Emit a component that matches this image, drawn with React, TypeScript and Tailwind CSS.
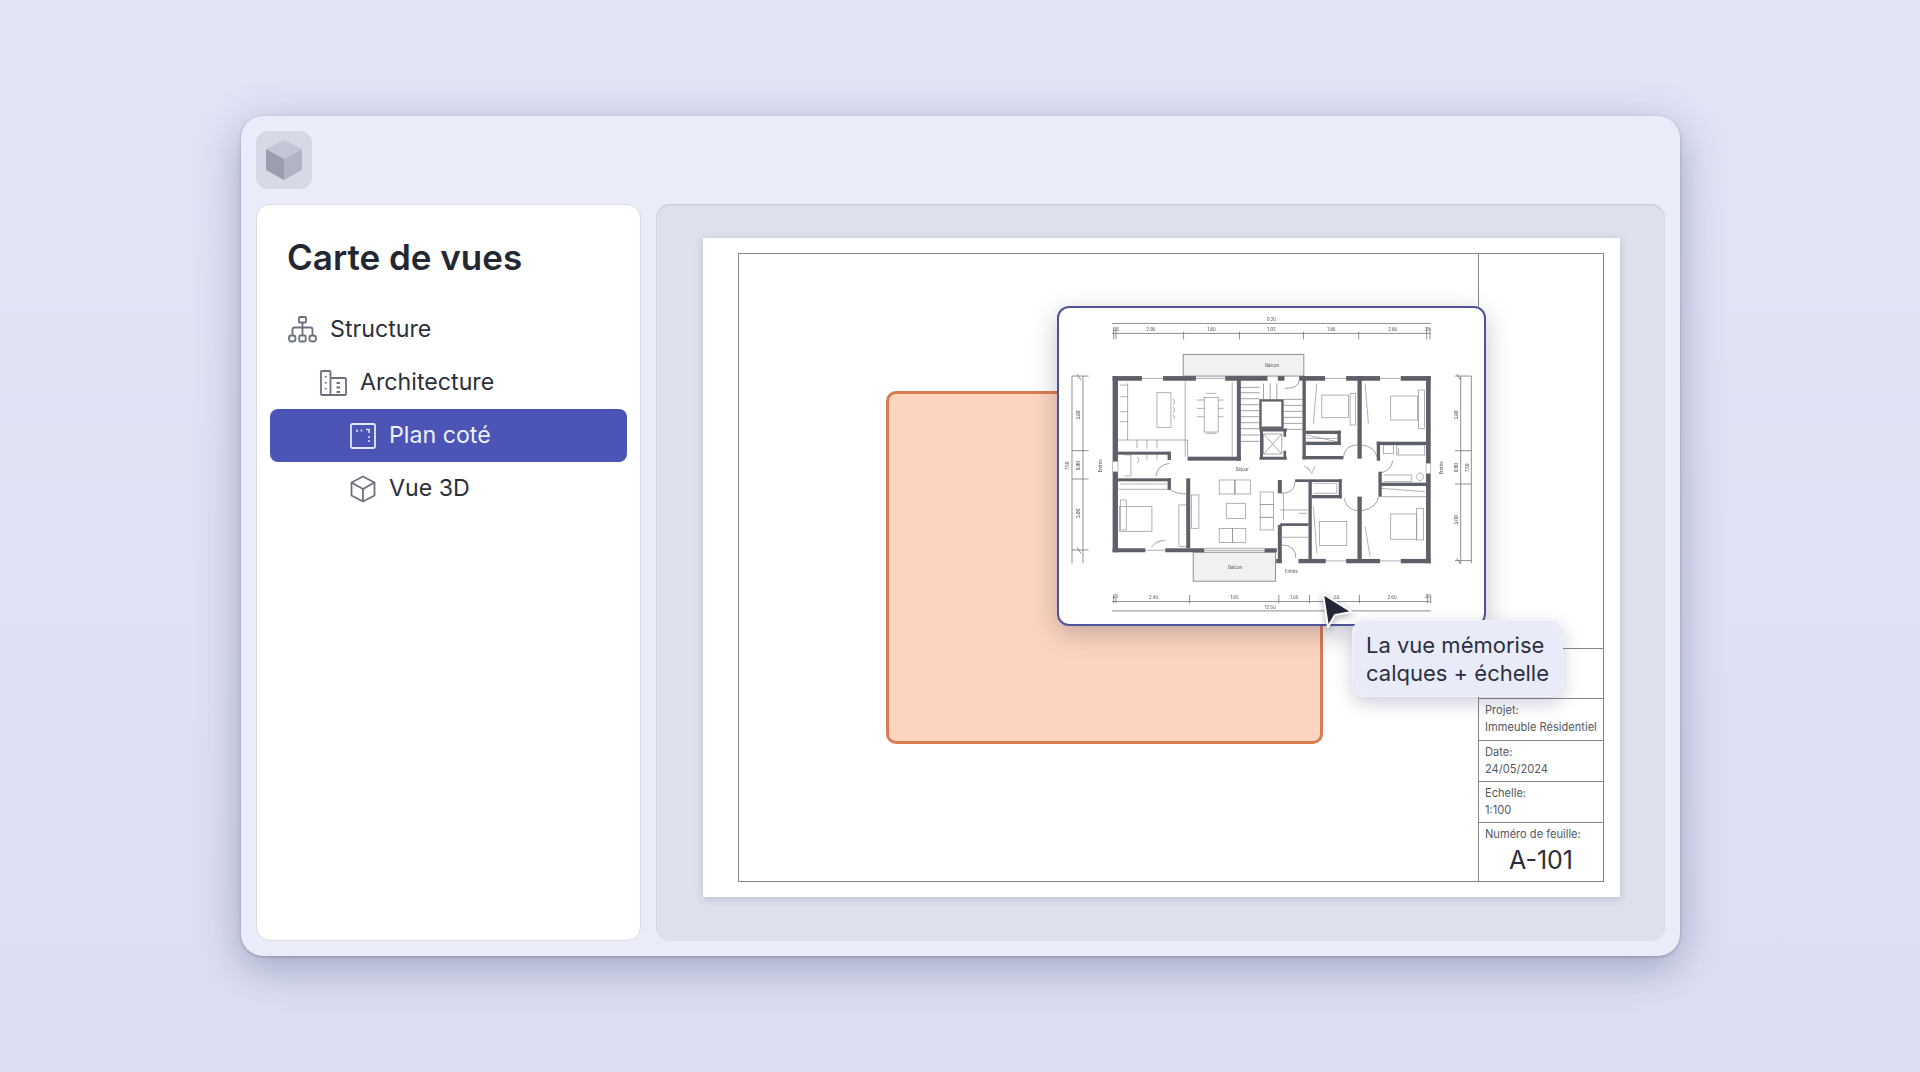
import React from "react";

const walls: number[][] = [
  [187,228,88,14],[338,228,99,14],[525,228,127,14],[683,228,20,14],[747,228,78,14],[888,228,102,14],[1052,228,90,14],
  [187,228,16,257],[187,515,16,242],[187,745,98,12],[345,745,117,12],[643,745,37,12],
  [1128,228,14,262],[1128,520,14,270],[745,777,82,13],[888,777,102,13],[1052,777,90,13],[678,777,17,13],
  [560,228,12,254],[412,470,160,12],[408,535,12,210],
  [203,455,157,9],[203,535,159,9],[352,455,10,25],[352,535,10,35],
  [757,228,10,250],[757,468,123,10],[767,392,105,10],[767,425,105,10],[862,392,10,43],
  [922,228,13,248],[980,425,10,57],[980,425,148,10],[985,515,10,75],[990,548,138,10],
  [683,540,12,40],[683,675,12,110],[735,538,140,8],[775,545,10,232],[785,585,90,10],[866,538,9,57],
  [922,590,13,187],[690,670,85,8]
];

const thin: number[][] = [
  [275,235,338,235],[437,235,525,235],[825,235,888,235],[990,235,1052,235],[285,751,345,751],[827,783,888,783],[990,783,1052,783],
  [462,751,643,751],[462,745,643,745],[690,712,775,712],
  [405,242,405,470],[546,245,546,470],[232,250,232,420],[232,420,412,420],[412,470,412,420],
  [203,420,232,420],[205,568,358,568],[770,415,862,415],[990,590,1128,590],[690,630,775,630]
];

const furniture: number[][] = [
  [320,278,42,104],[462,292,42,104],[815,285,80,68],[1022,288,80,72],[207,620,98,74],[808,665,82,72],[1022,642,78,76],
  [507,540,47,42],[554,540,47,42],[528,610,58,46],[507,686,40,42],[547,686,40,42],[630,576,40,38],[630,614,40,38],[630,652,40,38],
  [424,585,22,100],[386,615,26,125],[1040,435,84,30],[1000,435,30,26],[900,280,16,95],[1105,270,18,115],[1100,625,20,95],[210,600,18,90]
];

const dims: [number, number, string][] = [
  [664,60,"9.20"],[302,90,"2.90"],[484,90,"1.80"],[664,90,"1.92"],[844,90,"1.80"],[1028,90,"2.80"],[197,90,".25"],[1132,90,".25"],
  [310,894,"2.40"],[553,894,"1.65"],[732,894,"1.05"],[858,894,".50"],[1026,894,"2.60"],[195,890,".25"],[1132,890,".25"],[660,922,"12.50"],
  [576,508,"Séjour"],[724,816,"Entrée"]
];

const vdims: [number, number, string][] = [
  [90,345,"3.60"],[90,497,"0.90"],[90,640,"3.00"],[56,497,"7.50"],[155,497,"Entrée"],
  [1225,345,"3.60"],[1225,503,"0.90"],[1225,660,"3.00"],[1256,503,"7.50"],[1178,503,"Entrée"]
];

function FloorPlan() {
  const ink = "#777a82";
  return (
    <svg viewBox="26 24 1276 948" className="block h-full w-full blur-[0.6px]">
      <g stroke={ink} strokeWidth="2.5" fill="none">
        <path d="M185 70H1142M185 100H1142M185 905H1142M185 933H1142M65 228V790M98 228V790M1232 228V790M1264 228V790" />
        <path d="M190 82V118M197 84V118M400 95V118M568 95V118M760 95V118M926 95V118M1130 82V118M1140 84V118" />
        <path d="M190 885V910M197 890V910M418 885V910M686 885V910M778 885V910M820 885V910M928 885V910M1132 885V910M1142 885V910" />
        <path d="M65 228H115M65 452H115M65 537H115M65 750H115M1215 228H1264M1215 452H1264M1215 552H1264M1215 782H1264" />
        <path d="M80 222L92 240M80 742L92 760M1220 222L1232 240M1220 775L1232 793" />
      </g>
      {dims.map(([x, y, t]) => (
        <text key={t + x} x={x} y={y + 4} fontSize="13" textAnchor="middle" fill="#44464c" fontFamily="Inter, sans-serif">{t}</text>
      ))}
      {vdims.map(([x, y, t]) => (
        <text key={t + y + x} x={x} y={y} fontSize="13" textAnchor="middle" fill="#44464c" fontFamily="Inter, sans-serif" transform={"rotate(-90 " + x + " " + y + ")"}>{t}</text>
      ))}
      <rect x="399" y="163" width="362" height="65" fill="#f1f1f2" stroke="#8f9198" strokeWidth="3" />
      <rect x="429" y="757" width="247" height="87" fill="#f1f1f2" stroke="#8f9198" strokeWidth="3" />
      <text x="666" y="200" fontSize="13" textAnchor="middle" fill="#44464c" fontFamily="Inter, sans-serif">Balcon</text>
      <text x="555" y="806" fontSize="13" textAnchor="middle" fill="#44464c" fontFamily="Inter, sans-serif">Balcon</text>
      <g stroke="#94969d" strokeWidth="2.2" fill="none">
        {furniture.map((r, i) => <rect key={i} x={r[0]} y={r[1]} width={r[2]} height={r[3]} />)}
        <path d="M554 540V582M547 686V728M440 300H462M440 325H462M440 350H462M504 300H520M504 325H520M504 350H520M468 280H498M468 400H498" />
        <path d="M368 295Q378 305 368 315M368 320Q378 330 368 340M368 345Q378 350 368 358" />
        <path d="M208 255H232M208 290H232M208 335H232M208 365H232M260 420V445M290 420V445M320 420V445M222 465H242V528H222" />
        <path d="M262 470Q270 480 262 490M290 464V480M320 464V480M210 552H350M770 405L860 425M992 565L1125 575" />
        <path d="M800 250L790 370M945 250L955 370M945 680L960 770" />
        <path d="M1000 525H1085V545H1000M1100 530A10 12 0 1 1 1100 531M1045 445V465" />
        <path d="M790 550H860V580H790M700 580V660M745 640H770M790 620L800 760" />
        <path d="M770 500L785 520L795 498M762 498L778 510" />
      </g>
      <g stroke="#7f8189" strokeWidth="2.2" fill="none">
        <path d="M317 530Q320 495 358 490M362 570Q372 580 408 582M695 580Q735 580 735 542M703 265Q747 265 747 240M880 470Q885 435 922 435M935 435Q975 440 980 470M882 595Q890 630 922 632M935 632Q980 625 985 590M990 520Q1025 510 1028 482M695 735Q737 735 737 775M303 742Q320 720 345 722" />
      </g>
      <g stroke="#7f8189" strokeWidth="2.2" fill="none">
        <path d="M572 262H628M572 278H628M572 296H628M572 314H628M572 332H628M572 350H628M572 368H628M572 386H628M572 405H628M572 424H628M700 298H757M700 316H757M700 334H757M700 352H757M700 370H757M700 388H757M640 250V298M660 250V298M680 250V298" />
      </g>
      <g fill="#5d6068">
        {walls.map((r, i) => <rect key={i} x={r[0]} y={r[1]} width={r[2]} height={r[3]} />)}
      </g>
      <g stroke="#5d6068" fill="none">
        <rect x="631" y="301" width="66" height="82" strokeWidth="7" />
        <path d="M628 390H710M628 475H710M634 390V475" strokeWidth="9" />
        <path d="M704 390V410M704 452V475" strokeWidth="8" />
        <path d="M640 402L695 462M695 402L640 462M640 402H695V462H640Z" strokeWidth="2" stroke="#7f8189" />
      </g>
      <g stroke="#8f9198" strokeWidth="2.2" fill="none">
        {thin.map((l, i) => <line key={i} x1={l[0]} y1={l[1]} x2={l[2]} y2={l[3]} />)}
      </g>
      <rect x="187" y="485" width="16" height="30" fill="#fff" stroke="#a3a5ac" strokeWidth="2" />
      <rect x="1128" y="490" width="14" height="30" fill="#fff" stroke="#a3a5ac" strokeWidth="2" />
    </svg>
  );
}

function StructureIcon() {
  return (
    <svg viewBox="0 0 29 27" className="h-[27px] w-[29px]" fill="none" stroke="#6b7080" strokeWidth="1.8">
      <rect x="11" y="1" width="7" height="5.5" rx="0.8" />
      <path d="M14.5 6.5V15M4.5 19V13.5Q4.5 11.5 6.5 11.5H22.5Q24.5 11.5 24.5 13.5V19M14.5 15V19" />
      <rect x="1" y="19.5" width="6.5" height="6" rx="2.4" />
      <rect x="11.2" y="19.5" width="6.5" height="6" rx="1.4" />
      <rect x="21.4" y="19.5" width="6.5" height="6" rx="2.4" />
    </svg>
  );
}

function BuildingIcon() {
  return (
    <svg viewBox="0 0 27 26" className="h-[26px] w-[27px]" fill="none" stroke="#6b7080" strokeWidth="1.8">
      <path d="M2 1H9.5A1 1 0 0 1 10.5 2V25H2A1 1 0 0 1 1 24V2A1 1 0 0 1 2 1Z" />
      <path d="M10.5 8H25A1 1 0 0 1 26 9V24A1 1 0 0 1 25 25H10.5" />
      <path d="M5.7 6V7.5M5.7 12V13.5M5.7 18V19.5M16.5 13H20M16.5 17.5H20M16.5 22H20" />
    </svg>
  );
}

function PlanIcon() {
  return (
    <svg viewBox="0 0 26 26" className="h-[26px] w-[26px]" fill="none" stroke="#e4e7fa" strokeWidth="1.8">
      <rect x="1" y="1" width="24" height="24" rx="1.5" />
      <path d="M7 6.5V9M11.5 6.5V8.5M16 6.5H19V10M19 13V15M19 17V19" strokeWidth="1.5" />
    </svg>
  );
}

function BoxIcon() {
  return (
    <svg viewBox="0 0 26 28" className="h-[28px] w-[26px]" fill="none" stroke="#6b7080" strokeWidth="1.8" strokeLinejoin="round">
      <path d="M13 1.5L24.5 7.5V20.5L13 26.5L1.5 20.5V7.5Z" />
      <path d="M1.5 7.5L13 14L24.5 7.5M13 14V26.5" />
    </svg>
  );
}

function LogoCube() {
  return (
    <svg viewBox="0 0 38 42" className="h-[42px] w-[38px]">
      <path d="M19 1L37 10L19 20L1 10Z" fill="#c3c6d4" />
      <path d="M1 10L19 20V41L1 31Z" fill="#9a9eae" />
      <path d="M37 10L19 20V41L37 31Z" fill="#b1b4c4" />
    </svg>
  );
}

function Row({ pad, icon, label, active }: { pad: string; icon: React.ReactNode; label: string; active?: boolean }) {
  return (
    <div className={(active ? "bg-[#4c55b5] text-[#eef0fc] " : "text-[#2b2f3a] ") + pad + " flex h-[53px] items-center rounded-lg"}>
      {icon}
      <span className="text-[23.2px] leading-none">{label}</span>
    </div>
  );
}

function TitleCell({ a, b, h }: { a: string; b: string; h: string }) {
  return (
    <div className={h + " border-t border-[#85878e] pl-[6px] pt-[3px] text-[11.1px] leading-[16.5px] text-[#555861]"}>
      <div>{a}</div>
      <div>{b}</div>
    </div>
  );
}

export default function App() {
  return (
    <div className="h-[1072px] w-full overflow-hidden bg-gradient-to-b from-[#e2e5f6] to-[#dcdff1] pl-[241px] pt-[116px] font-['Inter',sans-serif]">
      <div className="flex h-[840px] w-[1439px] flex-col rounded-[22px] bg-[#eaedf9] p-[15px] shadow-[0_1px_3px_rgba(90,95,130,0.45),0_12px_44px_rgba(85,90,130,0.45)]">
        <div className="mb-[15px] flex h-[58px] w-[56px] items-center justify-center rounded-[12px] bg-[#d6d9e6]">
          <LogoCube />
        </div>
        <div className="flex min-h-0 flex-1 gap-[15px]">
          <aside className="w-[385px] rounded-[14px] border border-[#d9dbe6] bg-white">
            <h1 className="mb-[24px] ml-[30px] mt-[30px] text-[35px] font-semibold leading-[44px] text-[#232732]">Carte de vues</h1>
            <div className="mx-[13px]">
              <Row pad="pl-[18px] gap-[13px]" icon={<StructureIcon />} label="Structure" />
              <Row pad="pl-[50px] gap-[13px]" icon={<BuildingIcon />} label="Architecture" />
              <Row pad="pl-[80px] gap-[13px]" icon={<PlanIcon />} label="Plan coté" active />
              <Row pad="pl-[80px] gap-[13px]" icon={<BoxIcon />} label="Vue 3D" />
            </div>
          </aside>
          <main className="flex-1 rounded-[14px] bg-[#dee0ec] pl-[47px] pt-[34px] shadow-[inset_0_1px_2px_rgba(100,100,130,0.2)]">
            <div className="relative h-[659px] w-[917px] bg-white pb-[15px] pl-[35px] pr-[16px] pt-[15px] shadow-[0_2px_8px_rgba(70,75,110,0.22)]">
              <div className="flex h-full border border-[#85878e]">
                <div className="flex-1" />
                <div className="flex w-[125px] flex-col border-l border-[#85878e]">
                  <div className="h-[394px]" />
                  <div className="h-[50px] border-t border-[#85878e]" />
                  <TitleCell a="Projet:" b="Immeuble Résidentiel" h="h-[42px]" />
                  <TitleCell a="Date:" b="24/05/2024" h="h-[41px]" />
                  <TitleCell a="Echelle:" b="1:100" h="h-[41px]" />
                  <div className="flex-1 border-t border-[#85878e] pl-[6px] pt-[3px] text-[11.1px] leading-[16.5px] text-[#555861]">
                    <div>Numéro de feuille:</div>
                    <div className="mr-[6px] mt-[3px] text-center text-[25px] leading-[28px] text-[#2b2f3a]">A-101</div>
                  </div>
                </div>
              </div>
              <div className="absolute left-[183px] top-[153px] h-[353px] w-[437px] rounded-[10px] border-[3px] border-[#d97c52] bg-[#fdd5bf]" />
              <div className="absolute left-[354px] top-[68px] h-[320px] w-[429px] overflow-hidden rounded-[12px] border-2 border-[#4f5399] bg-white shadow-[0_8px_26px_rgba(50,50,80,0.28)]">
                <FloorPlan />
              </div>
              <svg viewBox="0 0 36 40" className="absolute left-[617px] top-[352px] h-[42px] w-[36px] drop-shadow-[0_2px_3px_rgba(30,30,60,0.35)]">
                <path d="M3 3L32 21L15 24L8 36Z" fill="#232838" stroke="#ffffff" strokeWidth="2" strokeLinejoin="round" />
              </svg>
              <div className="absolute left-[649px] top-[382px] flex h-[77px] w-[211px] flex-col justify-center rounded-[12px] border border-[#f0f2fb] bg-[#e9ecf8] pl-[13px] text-[22px] leading-[28px] text-[#2b3040] shadow-[0_6px_18px_rgba(60,65,110,0.25)]">
                <div>La vue mémorise</div>
                <div>calques + échelle</div>
              </div>
            </div>
          </main>
        </div>
      </div>
    </div>
  );
}
